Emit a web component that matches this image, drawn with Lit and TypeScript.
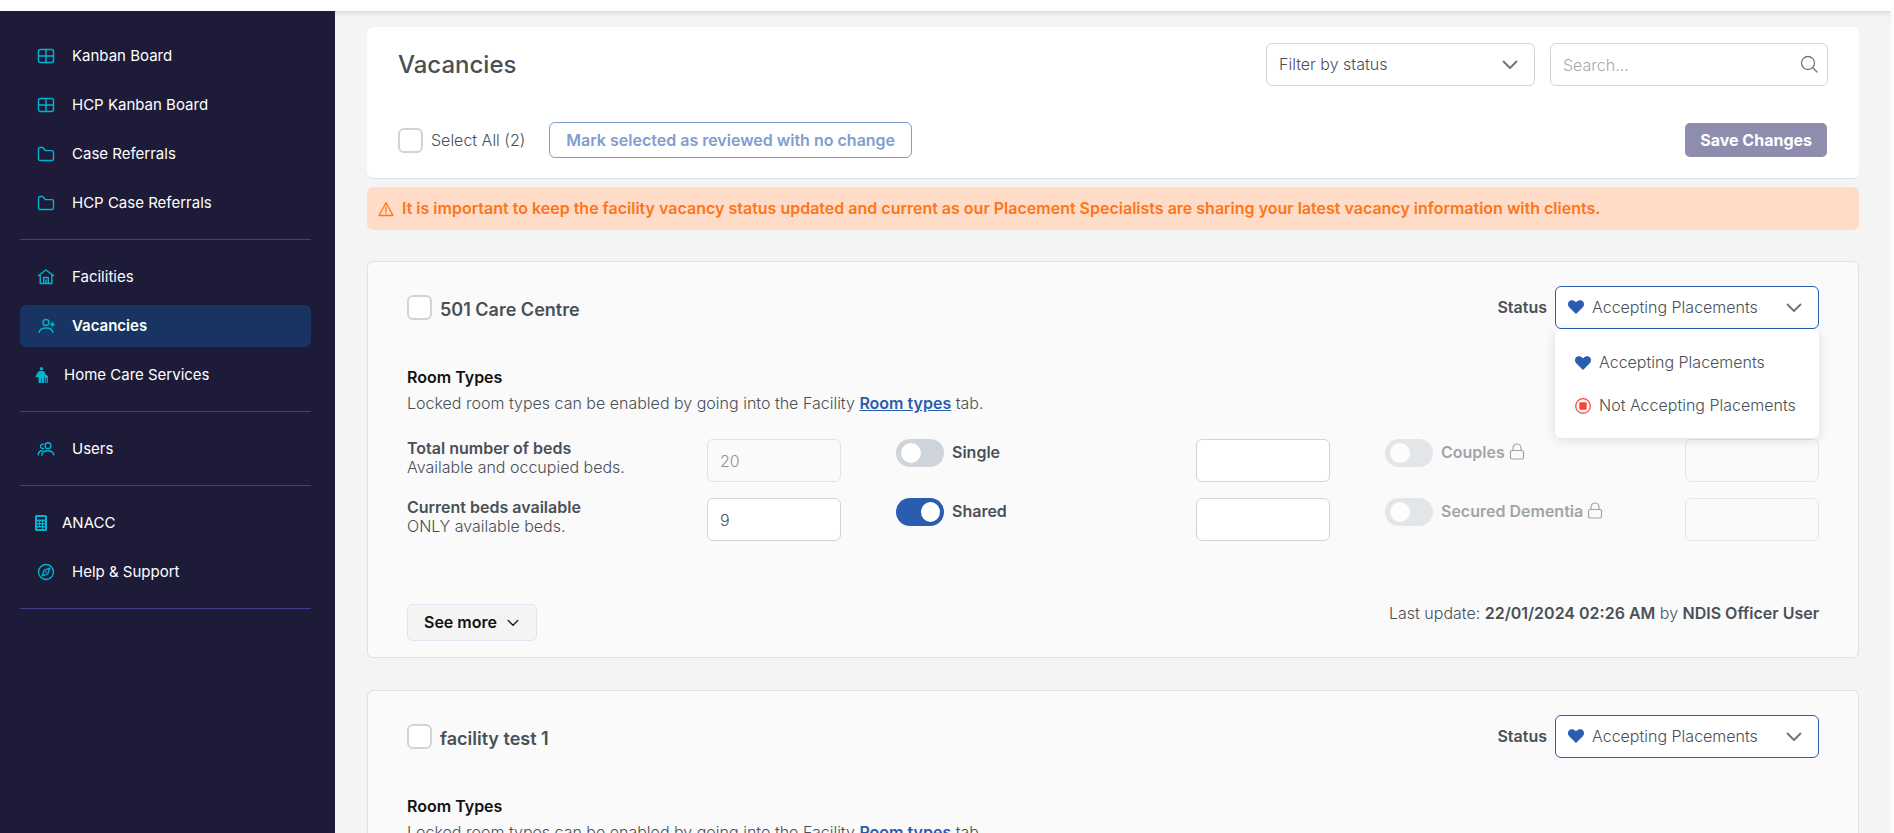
import { LitElement, html, css, svg, nothing } from "lit";
import { customElement, property, state } from "lit/decorators.js";

const baseFont = css`
  :host { font-family: Inter, "Liberation Sans", sans-serif; font-weight: 300; color: #495057; }
  * { box-sizing: border-box; }
  svg { display: block; flex: none; }
  h1, h2, h3, p, ul { margin: 0; padding: 0; }
  button, input, select { font: inherit; color: inherit; margin: 0; }
`;

const stroke = (inner: unknown, size = 18, width = 1.5, box = 24) => html`<svg width=${size} height=${size} viewBox="0 0 ${box} ${box}" fill="none" stroke="currentColor" stroke-width=${width} stroke-linecap="round" stroke-linejoin="round" aria-hidden="true">${inner}</svg>`;

const icons: Record<string, () => unknown> = {
  board: () => stroke(svg`<rect x="1.5" y="2.5" width="15" height="13" rx="2"/><path d="M9 2.500v13M1.500 9h15"/>`, 18, 1.4, 18),
  folder: () => stroke(svg`<path d="M1.5 4a1.5 1.5 0 0 1 1.500-1.500h2.200a1.500 1.500 0 0 1 1.200.600l1.400 1.900a1.500 1.500 0 0 0 1.200.600H15A1.500 1.500 0 0 1 16.500 7v7a1.500 1.500 0 0 1-1.500 1.500H3A1.500 1.500 0 0 1 1.500 14z"/>`, 18, 1.4, 18),
  home: () => stroke(svg`<path d="M1.500 7.500 9 2l7.500 5.500M3.200 6.500v9h11.600v-9M6.700 15.500v-6h4.600v6M9 12v3.500"/>`, 18, 1.4, 18),
  userPlus: () => stroke(svg`<circle cx="9" cy="5.500" r="3"/><path d="M2.200 15.300c.5-3 3-4.300 6.800-4.300s6.300 1.300 6.800 4.300"/><path fill="currentColor" stroke-width=".8" d="m15.500 5.300.7 1.500 1.500.7-1.500.7-.7 1.500-.7-1.500-1.500-.7 1.500-.7z"/>`, 18, 1.4, 18),
  care: () => html`<svg width="14" height="16" viewBox="0 0 14 16" fill="currentColor" aria-hidden="true"><circle cx="6.500" cy="1.800" r="1.700"/><path d="M4.700 4h3.400c.6 0 1 .3 1.300.8l1.300 2.800 1.600 1c.9.700.9 1.500.5 2V16h-1.200v-4.800h-.8V16H9.700v-6L9 9.500V16H6.900v-4h-.6v4H3.600V9.500l-.5.700H.9c-.4-.4-.4-1 0-1.700l2.300-3.700c.4-.5.900-.8 1.500-.8z"/></svg>`,
  users: () => stroke(svg`<circle cx="11" cy="5.700" r="2.900"/><path d="M4.800 15.200c0-3 2.200-4.500 6.200-4.500 3.200 0 5.300 1.500 5.800 4.200M6.200 4.200A2.200 2.200 0 1 0 6.500 8.400M1.200 14.800c.2-2.600 1.500-3.900 4-4.300"/>`, 18, 1.4, 18),
  calc: () => html`<svg width="12" height="16" viewBox="0 0 12 16" aria-hidden="true"><path fill="currentColor" fill-rule="evenodd" d="M1.500 0h9A1.500 1.500 0 0 1 12 1.500v13a1.500 1.500 0 0 1-1.500 1.500h-9A1.500 1.500 0 0 1 0 14.500v-13A1.500 1.500 0 0 1 1.500 0zM2 2v2.500h8V2zM2 6.500V8h2V6.500zm3 0V8h2V6.500zm3 0V8h2V6.500zM2 9.500V11h2V9.500zm3 0V11h2V9.500zm3 0V11h2V9.500zM2 12.500V14h5v-1.500zm6 0V14h2v-1.500z"/></svg>`,
  compass: () => stroke(svg`<circle cx="9" cy="9" r="7.500"/><path d="m12.800 5.200-2 5.600-5.600 2 2-5.600zM9 8.700v.6"/>`, 18, 1.4, 18),
  chevron: () => stroke(svg`<path d="M1.500 4.500 8 11l6.500-6.500"/>`, 16, 1.8, 16),
  search: () => stroke(svg`<circle cx="8" cy="8" r="6.500"/><path d="m13 13 4 4"/>`, 18, 1.3, 18),
  warning: () => stroke(svg`<path d="M8 1.800 15 14.500H1zM8 6v4.500M8 12.200v.4"/>`, 16, 1.300, 16),
  lock: () => stroke(svg`<rect x="1.500" y="7.500" width="13" height="8.500" rx="1.500"/><path d="M4 7.500V5a4 4 0 0 1 8 0v2.500"/>`, 17, 1.200, 17),
  heart: () => html`<svg width="16" height="14" viewBox="0 0 16 14" fill="#2a5caf" aria-hidden="true"><path d="M8 14 1.200 7.300C-.3 5.700-.4 3.200.9 1.600 2.300 0 4.700-.3 6.400.9L8 2.200 9.600.9c1.700-1.200 4.100-.9 5.500.7 1.300 1.600 1.200 4.100-.3 5.700z"/></svg>`,
  stop: () => html`<svg width="16" height="16" viewBox="0 0 16 16" aria-hidden="true"><circle cx="8" cy="8" r="7.300" fill="none" stroke="#fd4237" stroke-width="1.200"/><rect x="4.300" y="4.300" width="7.400" height="7.400" rx="1" fill="#fd4237"/></svg>`,
};

interface NavItem { label: string; icon: string; active?: boolean; kind?: string; }

@customElement("side-nav")
class SideNav extends LitElement {
  static styles = [baseFont, css`
    :host { display: block; background: #1e1b38; padding: 24px 24px 24px 20px; }
    .group { list-style: none; display: grid; gap: 7px; padding-bottom: 15px; margin-bottom: 16px; border-bottom: 1px solid #463c8c; }
    .link { display: flex; align-items: center; height: 42px; padding: 0 17px; gap: 17px; border-radius: 6px; color: #fff; text-decoration: none; font-size: 15px; line-height: 18px; font-weight: 400; }
    .link.solid { padding-left: 15px; gap: 15px; }
    .link.active { background: #183462; font-weight: 600; }
    .link svg { color: #00b5d0; }
  `];
  groups: NavItem[][] = [
    [{ label: "Kanban Board", icon: "board" }, { label: "HCP Kanban Board", icon: "board" }, { label: "Case Referrals", icon: "folder" }, { label: "HCP Case Referrals", icon: "folder" }],
    [{ label: "Facilities", icon: "home" }, { label: "Vacancies", icon: "userPlus", active: true }, { label: "Home Care Services", icon: "care", kind: "solid" }],
    [{ label: "Users", icon: "users" }],
    [{ label: "ANACC", icon: "calc", kind: "solid" }, { label: "Help & Support", icon: "compass" }],
  ];
  render() {
    return html`<nav aria-label="Main">${this.groups.map((g) => html`<ul class="group">${g.map((i) => html`
      <li><a class="link ${i.active ? "active" : ""} ${i.kind ?? ""}" href="#">${icons[i.icon]()}<span>${i.label}</span></a></li>`)}</ul>`)}</nav>`;
  }
}

@customElement("status-select")
class StatusSelect extends LitElement {
  @property({ type: Boolean }) open = false;
  static styles = [baseFont, css`
    :host { display: flex; align-items: center; gap: 8px; font-size: 16px; }
    .label { font-weight: 600; }
    .box { position: relative; width: 264px; }
    .select { appearance: none; display: block; width: 100%; height: 43px; padding: 0 48px 0 36px; border: 1px solid #2a5caf; border-radius: 6px; background: #fff; }
    .heart { position: absolute; left: 13px; top: 14px; pointer-events: none; }
    .chevron { position: absolute; right: 17px; top: 14px; pointer-events: none; color: #6c757d; }
    .menu { position: absolute; z-index: 2; top: 100%; left: 0; right: 0; list-style: none; padding: 12px 0 11px; background: #fff; border-radius: 6px; box-shadow: 0 2px 12px rgba(0, 0, 0, 0.12); }
    .option { display: flex; align-items: center; gap: 8px; width: 100%; height: 43px; padding: 0 20px; border: 0; background: none; white-space: nowrap; text-align: left; }
  `];
  render() {
    return html`
      <label class="label" for="status">Status</label>
      <div class="box">
        <select class="select" id="status"><option>Accepting Placements</option><option>Not Accepting Placements</option></select>
        <span class="heart">${icons.heart()}</span><span class="chevron">${icons.chevron()}</span>
        ${this.open ? html`<ul class="menu">
          <li><button class="option" type="button">${icons.heart()}Accepting Placements</button></li>
          <li><button class="option" type="button">${icons.stop()}Not Accepting Placements</button></li>
        </ul>` : nothing}
      </div>`;
  }
}

@customElement("facility-card")
class FacilityCard extends LitElement {
  @property() name = "";
  @property({ type: Boolean }) open = false;
  static styles = [baseFont, css`
    :host { display: block; padding: 24px 39px 16px; background: #fafafa; border: 1px solid #dfe0e1; border-radius: 6px; font-size: 16px; line-height: 19px; }
    .head { display: flex; justify-content: space-between; align-items: center; }
    .name { display: flex; align-items: center; gap: 8px; font-size: 18px; font-weight: 600; }
    .name label { padding-top: 4px; }
    .check { appearance: none; width: 25px; height: 25px; border: 2px solid #ced4da; border-radius: 6px; background: #fff; }
    .title { margin-top: 39px; font-size: 16px; font-weight: 600; color: #121212; }
    .hint { margin-top: 7px; }
    .tab { font-weight: 600; color: #2a5caf; }
    .grid { display: grid; grid-template-columns: repeat(3, 1fr); gap: 16px 55px; margin-top: 26px; }
    .cell { display: flex; justify-content: space-between; align-items: flex-start; }
    .cell.locked { opacity: 0.5; }
    .strong { display: block; font-weight: 600; }
    .num { width: 134px; height: 43px; padding: 0 12px; border: 1px solid #ced4da; border-radius: 6px; background: #fff; }
    .num:disabled { background: #fafafa; color: #495057; }
    .num.dim { opacity: 0.6; }
    .toggle { display: flex; align-items: flex-start; gap: 8px; font-weight: 600; }
    .switch { appearance: none; width: 48px; height: 28px; border-radius: 14px; background: #ced4da; padding: 4px; display: flex; }
    .switch::before { content: ""; width: 20px; height: 20px; margin-left: 1px; border-radius: 50%; background: #fff; }
    .switch:checked { background: #2a5caf; }
    .switch:checked::before { margin-left: 21px; }
    .text { display: flex; gap: 4px; padding-top: 4px; }
    .foot { display: flex; justify-content: space-between; align-items: flex-start; margin-top: 63px; }
    .more { display: flex; align-items: center; gap: 10px; height: 37px; padding: 0 17px 0 16px; border: 1px solid #dee5f3; border-radius: 6px; background: #f4f4f4; color: #121212; font-weight: 600; }
    .more svg { width: 12px; height: 12px; }
    b { font-weight: 600; }
  `];
  room(id: string, label: string, on: boolean, locked: boolean) {
    return html`<div class="cell ${locked ? "locked" : ""}">
      <label class="toggle"><input class="switch" type="checkbox" role="switch" .checked=${on} ?disabled=${locked}><span class="text">${label}${locked ? icons.lock() : nothing}</span></label>
      <input class="num" id=${id} aria-label="${label} beds" ?disabled=${locked}></div>`;
  }
  render() {
    return html`
      <div class="head">
        <h2 class="name"><input class="check" id="pick" type="checkbox"><label for="pick">${this.name}</label></h2>
        <status-select ?open=${this.open}></status-select>
      </div>
      <h3 class="title">Room Types</h3>
      <p class="hint">Locked room types can be enabled by going into the Facility <a class="tab" href="#">Room types</a> tab.</p>
      <div class="grid">
        <div class="cell"><label for="total"><span class="strong">Total number of beds</span>Available and occupied beds.</label><input class="num dim" id="total" value="20" disabled></div>
        ${this.room("single", "Single", false, false)}${this.room("couples", "Couples", false, true)}
        <div class="cell"><label for="current"><span class="strong">Current beds available</span>ONLY available beds.</label><input class="num" id="current" value="9"></div>
        ${this.room("shared", "Shared", true, false)}${this.room("dementia", "Secured Dementia", false, true)}
      </div>
      <div class="foot">
        <button class="more" type="button">See more ${icons.chevron()}</button>
        <p>Last update: <b>22/01/2024 02:26 AM</b> by <b>NDIS Officer User</b></p>
      </div>`;
  }
}

@customElement("app-root")
class AppRoot extends LitElement {
  @state() facilities = [{ name: "501 Care Centre", open: true }, { name: "facility test 1", open: false }];
  static styles = [baseFont, css`
    :host { display: flex; flex-direction: column; box-sizing: border-box; height: 100vh; overflow: hidden; background: #f4f4f4; border-right: 3px solid #fcfcfc; font-size: 16px; line-height: 19px; }
    .topbar { flex: none; height: 11px; background: #fff; box-shadow: 0 1px 6px rgba(0, 0, 0, 0.16); }
    .layout { flex: 1; min-height: 0; display: grid; grid-template-columns: 335px minmax(0, 1fr); }
    side-nav { position: relative; }
    .main { padding: 16px 32px 32px; overflow: hidden; }
    .panel { padding: 16px 31px 20px; background: #fff; border-bottom: 1px solid #dcdde8; border-radius: 6px; }
    .row { display: flex; align-items: center; }
    .title { flex: 1; font-size: 24px; line-height: 32px; font-weight: 500; }
    .field { position: relative; }
    .control { appearance: none; display: block; width: 100%; height: 43px; padding: 0 12px; border: 1px solid #ced4da; border-radius: 6px; background: #fff; }
    .control::placeholder { color: #a8a8ac; }
    .filter { width: 269px; margin-right: 15px; }
    .search { width: 278px; }
    .glyph { position: absolute; right: 10px; top: 12px; color: #6c757d; pointer-events: none; }
    .filter .glyph { right: 17px; top: 14px; }
    .actions { margin-top: 36px; }
    .save { margin-right: 1px; }
    .all { display: flex; align-items: center; gap: 8px; margin-right: 24px; }
    .check { appearance: none; width: 25px; height: 25px; border: 2px solid #ced4da; border-radius: 6px; background: #fff; }
    .mark { height: 36px; padding: 0 16px; border: 1px solid #7f9dcf; border-radius: 6px; background: #fff; color: #7f9dcf; font-weight: 600; }
    .save { height: 34px; margin-left: auto; padding: 0 15px; border: 0; border-radius: 5px; background: #8e8dae; color: #fff; font-weight: 700; }
    .alert { display: flex; align-items: center; gap: 8px; height: 43px; margin-top: 8px; padding: 0 11px; border-radius: 6px; background: #ffdcc7; color: #ff7519; font-weight: 600; }
    .cards { display: grid; gap: 32px; margin-top: 31px; }
  `];
  render() {
    return html`
      <header class="topbar"></header>
      <div class="layout">
        <side-nav></side-nav>
        <main class="main">
          <section class="panel">
            <div class="row">
              <h1 class="title">Vacancies</h1>
              <div class="field filter"><select class="control" aria-label="Filter by status"><option>Filter by status</option></select><span class="glyph">${icons.chevron()}</span></div>
              <div class="field search"><input class="control" type="text" placeholder="Search..." aria-label="Search"><span class="glyph">${icons.search()}</span></div>
            </div>
            <div class="row actions">
              <label class="all"><input class="check" type="checkbox">Select All (2)</label>
              <button class="mark" type="button">Mark selected as reviewed with no change</button>
              <button class="save" type="button">Save Changes</button>
            </div>
          </section>
          <div class="alert" role="alert">${icons.warning()}<span>It is important to keep the facility vacancy status updated and current as our Placement Specialists are sharing your latest vacancy information with clients.</span></div>
          <div class="cards">${this.facilities.map((f) => html`<facility-card name=${f.name} ?open=${f.open}></facility-card>`)}</div>
        </main>
      </div>`;
  }
}
